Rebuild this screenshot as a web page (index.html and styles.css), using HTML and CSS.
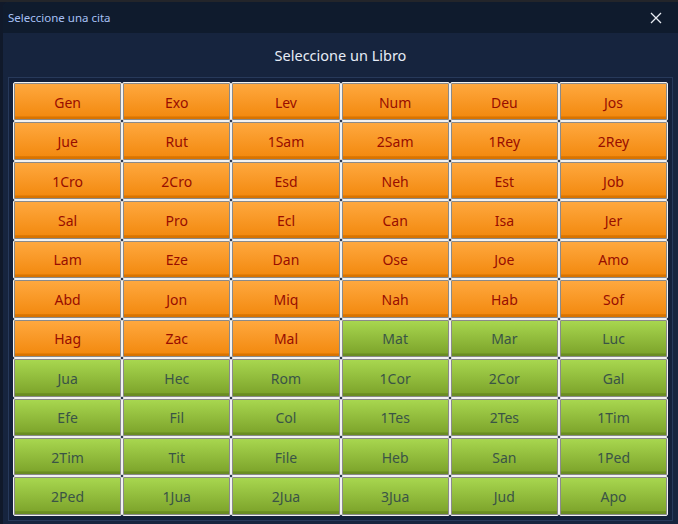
FILE: index.html
```html
<!DOCTYPE html>
<html>
<head>
<meta charset="utf-8">
<link rel="stylesheet" href="styles.css">
</head>
<body>
<div class="window">
  <div class="titlebar">
    <span class="title">Seleccione una cita</span>
    <svg class="close" width="12" height="12" viewBox="0 0 12 12"><path d="M1 1L11 11M11 1L1 11" stroke="#e8ecf2" stroke-width="1.3" fill="none"/></svg>
  </div>
  <div class="content">
    <div class="heading">Seleccione un Libro</div>
    <div class="panel">
      <div class="grid">
        <button class="book ot">Gen</button><button class="book ot">Exo</button><button class="book ot">Lev</button><button class="book ot">Num</button><button class="book ot">Deu</button><button class="book ot">Jos</button>
        <button class="book ot">Jue</button><button class="book ot">Rut</button><button class="book ot">1Sam</button><button class="book ot">2Sam</button><button class="book ot">1Rey</button><button class="book ot">2Rey</button>
        <button class="book ot">1Cro</button><button class="book ot">2Cro</button><button class="book ot">Esd</button><button class="book ot">Neh</button><button class="book ot">Est</button><button class="book ot">Job</button>
        <button class="book ot">Sal</button><button class="book ot">Pro</button><button class="book ot">Ecl</button><button class="book ot">Can</button><button class="book ot">Isa</button><button class="book ot">Jer</button>
        <button class="book ot">Lam</button><button class="book ot">Eze</button><button class="book ot">Dan</button><button class="book ot">Ose</button><button class="book ot">Joe</button><button class="book ot">Amo</button>
        <button class="book ot">Abd</button><button class="book ot">Jon</button><button class="book ot">Miq</button><button class="book ot">Nah</button><button class="book ot">Hab</button><button class="book ot">Sof</button>
        <button class="book ot">Hag</button><button class="book ot">Zac</button><button class="book ot">Mal</button><button class="book nt">Mat</button><button class="book nt">Mar</button><button class="book nt">Luc</button>
        <button class="book nt">Jua</button><button class="book nt">Hec</button><button class="book nt">Rom</button><button class="book nt">1Cor</button><button class="book nt">2Cor</button><button class="book nt">Gal</button>
        <button class="book nt">Efe</button><button class="book nt">Fil</button><button class="book nt">Col</button><button class="book nt">1Tes</button><button class="book nt">2Tes</button><button class="book nt">1Tim</button>
        <button class="book nt">2Tim</button><button class="book nt">Tit</button><button class="book nt">File</button><button class="book nt">Heb</button><button class="book nt">San</button><button class="book nt">1Ped</button>
        <button class="book nt">2Ped</button><button class="book nt">1Jua</button><button class="book nt">2Jua</button><button class="book nt">3Jua</button><button class="book nt">Jud</button><button class="book nt">Apo</button>
      </div>
    </div>
  </div>
</div>
</body>
</html>
```
FILE: styles.css
```css
html, body {
  margin: 0;
  padding: 0;
  height: 100%;
  overflow: hidden;
}
body {
  background: #10192a;
  border-top: 2px solid #23252a;
  box-sizing: border-box;
  padding-left: 3px;
  font-family: "Noto Sans", "Open Sans", sans-serif;
}
.window {
  width: 675px;
  height: 522px;
  background: #16243e;
  border-top-left-radius: 6px;
  overflow: hidden;
  display: flex;
  flex-direction: column;
}
.titlebar {
  height: 31px;
  background: #0f1b2d;
  display: flex;
  align-items: center;
  justify-content: space-between;
  padding: 0 16px 0 5px;
  flex-shrink: 0;
}
.title {
  color: #a7c0f5;
  font-size: 11.5px;
}
.close {
  display: block;
}
.content {
  display: flex;
  flex-direction: column;
  padding: 0 5px;
}
.heading {
  height: 44px;
  display: flex;
  align-items: center;
  justify-content: center;
  color: #e6ecf6;
  font-size: 14.5px;
  padding-bottom: 1px;
  box-sizing: border-box;
}
.panel {
  border: 1px solid #27395a;
  background: #13203a;
  padding: 4px;
}
.grid {
  display: grid;
  grid-template-columns: repeat(6, 109.2px);
  grid-template-rows: repeat(11, 39.45px);
}
.book {
  margin: 0;
  border: 1px solid #f2f2f2;
  border-radius: 2px;
  font-family: inherit;
  font-size: 14px;
  padding: 1px 0 0 0;
  cursor: pointer;
}
.ot {
  color: #980d00;
  background: linear-gradient(#ffa940, #f38a10 90%, #d97400 91%, #d97400);
  box-shadow: inset 0 0 0 1px #8a8a8a;
}
.nt {
  color: #3a5446;
  background: linear-gradient(#a9d850, #7ea52c 90%, #6a8d22 91%, #6a8d22);
  box-shadow: inset 0 0 0 1px #8a8a8a;
}
```
